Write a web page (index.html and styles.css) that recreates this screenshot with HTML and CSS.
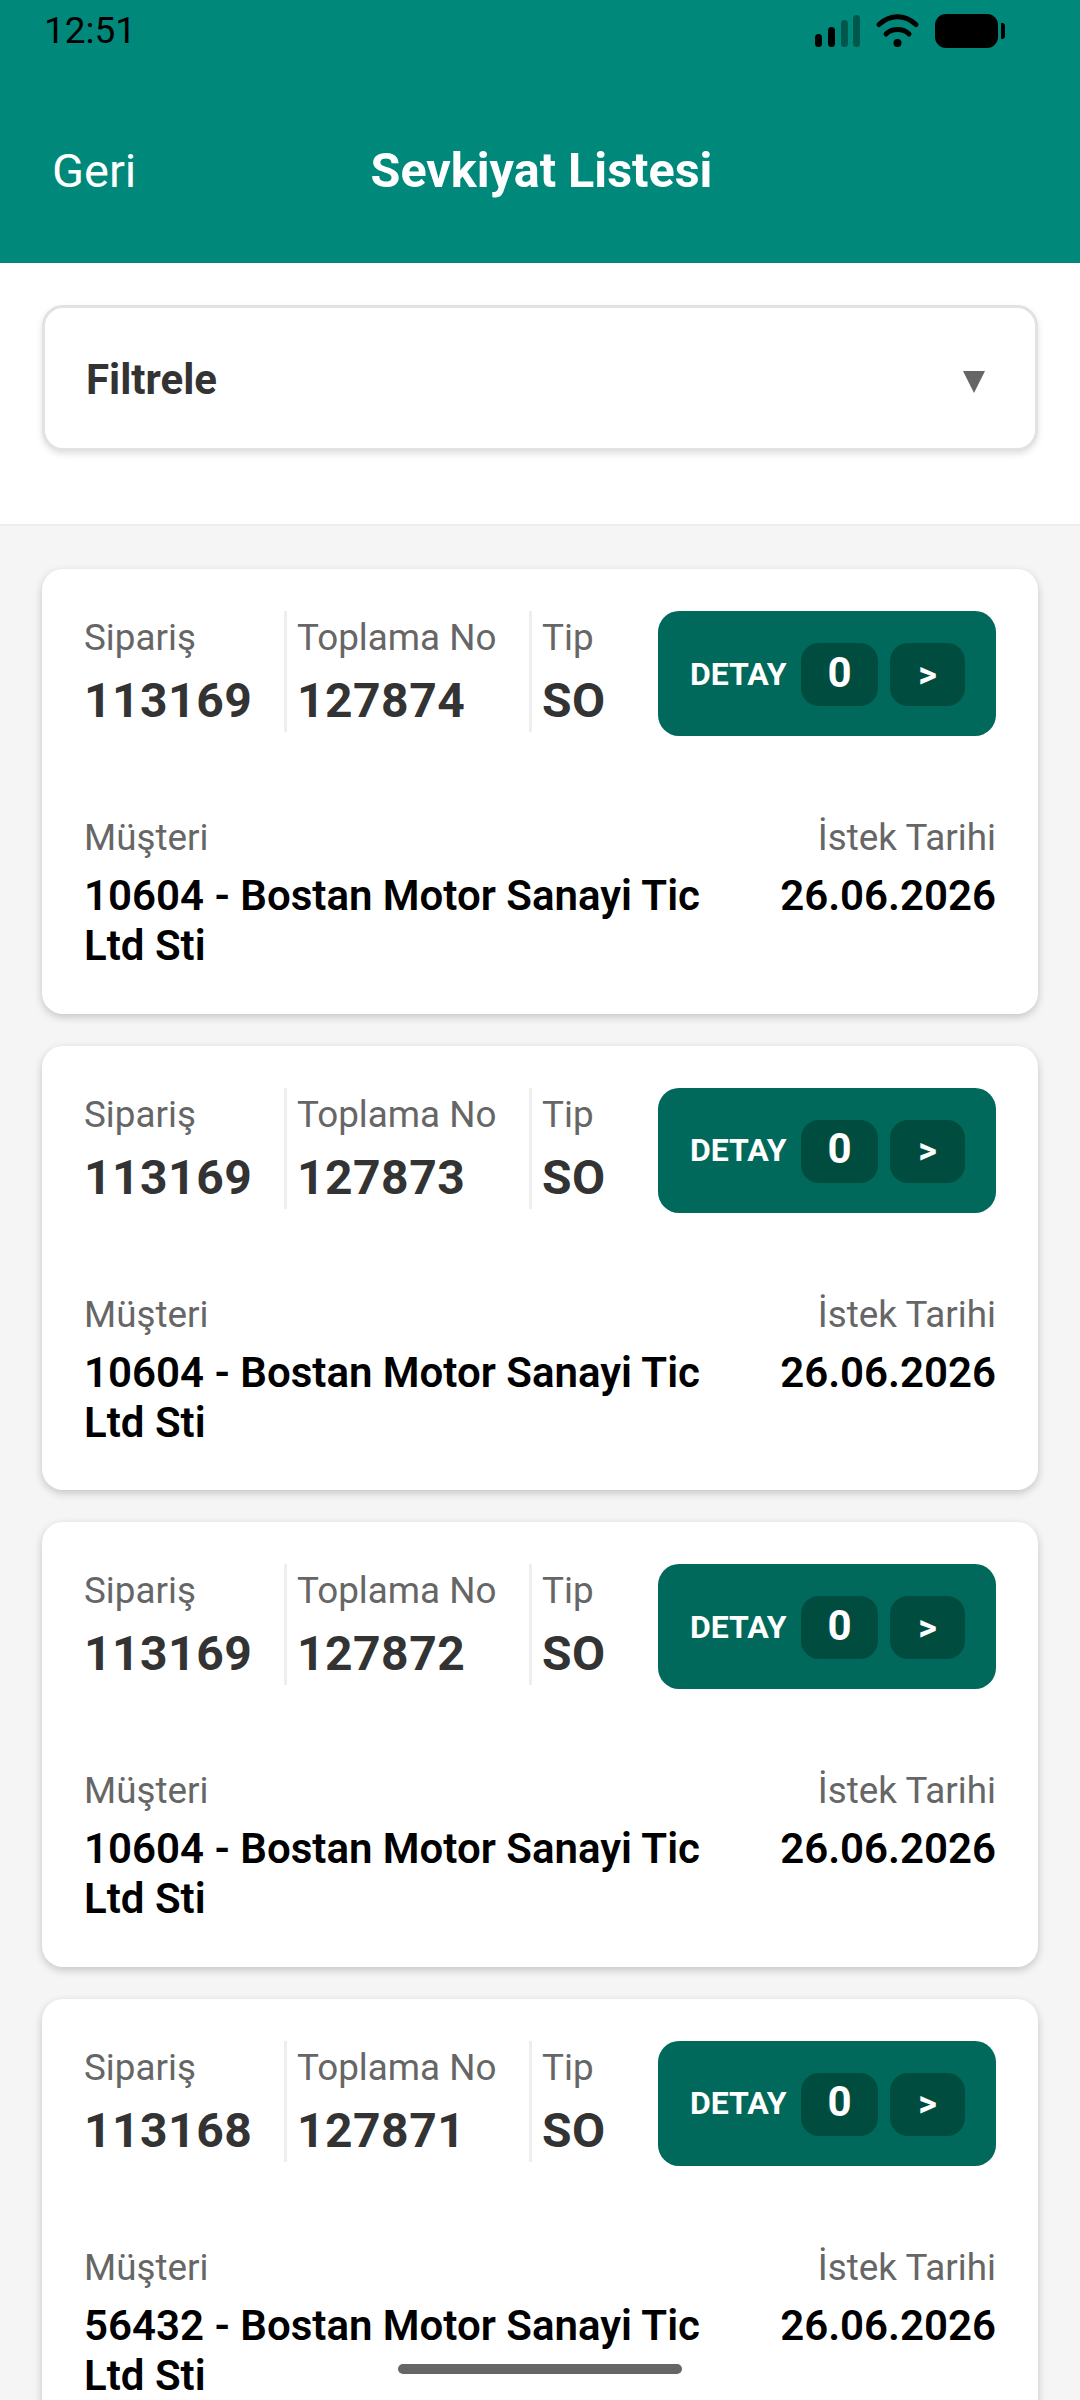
FILE: index.html
```html
<!DOCTYPE html>
<html lang="tr">
<head>
<meta charset="utf-8">
<title>Sevkiyat Listesi</title>
<link rel="stylesheet" href="styles.css">
</head>
<body>
<div class="screen">
  <header class="header">
    <div class="status">
      <span class="time">12:51</span>
      <svg class="status-icons" width="190" height="34" viewBox="815 14 190 34">
        <rect x="815" y="34" width="7" height="13" rx="3.5" fill="#000"/>
        <rect x="828" y="27" width="7" height="20" rx="3.5" fill="#000"/>
        <rect x="841" y="20" width="7" height="27" rx="3.5" fill="#00574c"/>
        <rect x="853" y="15" width="7" height="32" rx="3.5" fill="#00574c"/>
        <path d="M879 24.5C890 14 905 14 916 24.5" fill="none" stroke="#000" stroke-width="5" stroke-linecap="round"/>
        <path d="M886 34C892 28 903 28 909 34" fill="none" stroke="#000" stroke-width="5" stroke-linecap="round"/>
        <circle cx="897.5" cy="43" r="4" fill="#000"/>
        <rect x="935" y="14" width="63" height="34" rx="11" fill="#000"/>
        <path d="M1001 23h1a3 3 0 0 1 3 3v10a3 3 0 0 1-3 3h-1z" fill="#000"/>
      </svg>
    </div>
    <div class="nav">
      <span class="back">Geri</span>
      <h1 class="title">Sevkiyat Listesi</h1>
      <span class="nav-spacer"></span>
    </div>
  </header>

  <section class="filter-wrap">
    <div class="filter">
      <span class="filter-label">Filtrele</span>
      <svg class="filter-arrow" width="22" height="22" viewBox="0 0 22 22"><path d="M0 0H22L11 22Z" fill="#666"/></svg>
    </div>
  </section>

  <main class="list">
    <article class="card">
      <div class="card-top">
        <div class="cell cell-order"><div class="label">Sipariş</div><div class="value">113169</div></div>
        <div class="cell cell-pick"><div class="label">Toplama No</div><div class="value">127874</div></div>
        <div class="cell cell-type"><div class="label">Tip</div><div class="value">SO</div></div>
        <div class="detail"><span class="detail-text">DETAY</span><span class="chip chip-count">0</span><span class="chip chip-go">&gt;</span></div>
      </div>
      <div class="card-bottom">
        <div class="customer"><div class="label">Müşteri</div><div class="strong">10604 - Bostan Motor Sanayi Tic Ltd Sti</div></div>
        <div class="date"><div class="label">İstek Tarihi</div><div class="strong">26.06.2026</div></div>
      </div>
    </article>
    <article class="card">
      <div class="card-top">
        <div class="cell cell-order"><div class="label">Sipariş</div><div class="value">113169</div></div>
        <div class="cell cell-pick"><div class="label">Toplama No</div><div class="value">127873</div></div>
        <div class="cell cell-type"><div class="label">Tip</div><div class="value">SO</div></div>
        <div class="detail"><span class="detail-text">DETAY</span><span class="chip chip-count">0</span><span class="chip chip-go">&gt;</span></div>
      </div>
      <div class="card-bottom">
        <div class="customer"><div class="label">Müşteri</div><div class="strong">10604 - Bostan Motor Sanayi Tic Ltd Sti</div></div>
        <div class="date"><div class="label">İstek Tarihi</div><div class="strong">26.06.2026</div></div>
      </div>
    </article>
    <article class="card">
      <div class="card-top">
        <div class="cell cell-order"><div class="label">Sipariş</div><div class="value">113169</div></div>
        <div class="cell cell-pick"><div class="label">Toplama No</div><div class="value">127872</div></div>
        <div class="cell cell-type"><div class="label">Tip</div><div class="value">SO</div></div>
        <div class="detail"><span class="detail-text">DETAY</span><span class="chip chip-count">0</span><span class="chip chip-go">&gt;</span></div>
      </div>
      <div class="card-bottom">
        <div class="customer"><div class="label">Müşteri</div><div class="strong">10604 - Bostan Motor Sanayi Tic Ltd Sti</div></div>
        <div class="date"><div class="label">İstek Tarihi</div><div class="strong">26.06.2026</div></div>
      </div>
    </article>
    <article class="card">
      <div class="card-top">
        <div class="cell cell-order"><div class="label">Sipariş</div><div class="value">113168</div></div>
        <div class="cell cell-pick"><div class="label">Toplama No</div><div class="value">127871</div></div>
        <div class="cell cell-type"><div class="label">Tip</div><div class="value">SO</div></div>
        <div class="detail"><span class="detail-text">DETAY</span><span class="chip chip-count">0</span><span class="chip chip-go">&gt;</span></div>
      </div>
      <div class="card-bottom">
        <div class="customer"><div class="label">Müşteri</div><div class="strong">56432 - Bostan Motor Sanayi Tic Ltd Sti</div></div>
        <div class="date"><div class="label">İstek Tarihi</div><div class="strong">26.06.2026</div></div>
      </div>
    </article>
  </main>

  <div class="home-bar"></div>
</div>
</body>
</html>
```
FILE: styles.css
```css
* { box-sizing: border-box; }
html, body { margin: 0; padding: 0; }
body { font-family: Roboto, "Noto Sans", sans-serif; background: #f5f5f5; }
.screen { position: relative; width: 1080px; height: 2400px; overflow: hidden; background: #f5f5f5; }

.header { height: 263px; background: #00897b; }
.status { height: 62px; padding: 14px 75px 0 44px; display: flex; justify-content: space-between; align-items: flex-start; }
.time { font-size: 37px; line-height: 34px; color: #000; }
.status-icons { display: block; margin-left: auto; }
.nav { height: 100px; margin-top: 58px; padding: 0 52px; display: grid; grid-template-columns: 1fr auto 1fr; align-items: center; color: #fff; }
.back { font-size: 47px; }
.title { margin: 0 0 0 3px; font-size: 48.5px; font-weight: 700; }

.filter-wrap { height: 263px; padding: 42px 42px 0; background: #fff; border-bottom: 2px solid #eeeeee; }
.filter { height: 146px; padding: 0 50px 0 41px; display: flex; align-items: center; justify-content: space-between; background: #fff; border: 3px solid #e2e2e2; border-radius: 21px; box-shadow: 0 3px 6px rgba(0,0,0,.12); }
.filter-label { font-size: 42px; font-weight: 700; color: #333; padding-top: 2px; }
.filter-arrow { display: block; flex: none; margin-top: 8px; }

.list { padding: 43px 42px 0; display: flex; flex-direction: column; gap: 32px; }
.card { height: 444.5px; padding: 42px; background: #fff; border-radius: 21px; box-shadow: 0 3px 9px rgba(0,0,0,.2); flex: none; }
.card-top { display: flex; align-items: flex-start; height: 125px; }
.cell { height: 121px; }
.cell-order { width: 200px; }
.cell-pick { width: 245px; padding-left: 10px; border-left: 3px solid #eeeeee; }
.cell-type { padding-left: 10px; border-left: 3px solid #eeeeee; }
.label { font-size: 36.8px; line-height: 42px; color: #666; padding-top: 6px; font-weight: 400; }
.value { font-size: 48px; line-height: 56px; font-weight: 700; color: #333; margin-top: 14px; letter-spacing: .5px; }

.detail { margin-left: auto; width: 338px; height: 125px; padding-left: 32px; display: flex; align-items: center; background: #00695c; border-radius: 21px; }
.detail-text { font-size: 32px; font-weight: 700; color: #fff; width: 111px; }
.chip { height: 63px; margin-top: 2px; display: flex; align-items: center; justify-content: center; border-radius: 18px; background: #004d40; color: #fff; font-weight: 700; }
.chip-count { width: 77px; font-size: 42px; margin-right: 12px; padding-bottom: 5px; }
.chip-go { width: 75px; font-size: 36px; }

.card-bottom { display: flex; justify-content: space-between; margin-top: 75px; }
.customer { width: 630px; }
.date { text-align: right; }
.strong { font-size: 42px; line-height: 50px; font-weight: 600; color: #000; margin-top: 12px; }

.home-bar { position: absolute; left: 398px; top: 2364px; width: 284px; height: 10px; border-radius: 5px; background: #666; }
```
